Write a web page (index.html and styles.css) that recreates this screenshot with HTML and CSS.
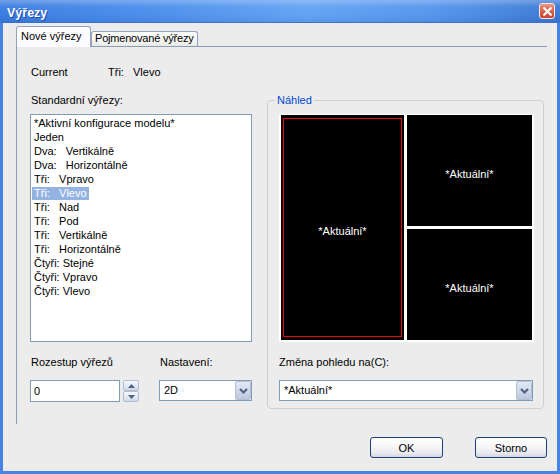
FILE: index.html
```html
<!DOCTYPE html>
<html lang="cs">
<head>
<meta charset="utf-8">
<title>Výřezy</title>
<link rel="stylesheet" href="styles.css">
</head>
<body>
<div class="window">
  <div class="titlebar">
    <span class="title">Výřezy</span>
    <span class="close"><svg width="9" height="9" viewBox="0 0 9 9"><path d="M1.2 1.2 L7.8 7.8 M7.8 1.2 L1.2 7.8" stroke="#fff" stroke-width="2" stroke-linecap="square"/></svg></span>
  </div>
  <div class="client">
    <div class="tabs">
      <div class="tab active">Nové výřezy</div>
      <div class="tab">Pojmenované výřezy</div>
    </div>
    <div class="panel">
      <div class="current"><span class="c1">Current</span><span class="c2">Tři:</span><span>Vlevo</span></div>
      <div class="cols">
        <div class="leftcol">
          <div class="label">Standardní výřezy:</div>
          <div class="listbox">
            <div class="item">*Aktivní konfigurace modelu*</div>
            <div class="item">Jeden</div>
            <div class="item">Dva:   Vertikálně</div>
            <div class="item">Dva:   Horizontálně</div>
            <div class="item">Tři:   Vpravo</div>
            <div class="item"><span class="sel">Tři:   Vlevo</span></div>
            <div class="item">Tři:   Nad</div>
            <div class="item">Tři:   Pod</div>
            <div class="item">Tři:   Vertikálně</div>
            <div class="item">Tři:   Horizontálně</div>
            <div class="item">Čtyři: Stejné</div>
            <div class="item">Čtyři: Vpravo</div>
            <div class="item">Čtyři: Vlevo</div>
          </div>
          <div class="bottomrow">
            <div class="field f1">
              <div class="label">Rozestup výřezů</div>
              <div class="inrow">
                <div class="input">0</div>
                <div class="spin">
                  <div class="sb"><svg width="7" height="4" viewBox="0 0 7 4"><path d="M0 4 L3.5 0 L7 4 Z" fill="#4d6185"/></svg></div>
                  <div class="sb"><svg width="7" height="4" viewBox="0 0 7 4"><path d="M0 0 L3.5 4 L7 0 Z" fill="#4d6185"/></svg></div>
                </div>
              </div>
            </div>
            <div class="field f2">
              <div class="label">Nastavení:</div>
              <div class="combo small">
                <span class="val">2D</span>
                <span class="dd"><svg width="9" height="6" viewBox="0 0 9 6"><path d="M1 1 L4.5 4.5 L8 1" fill="none" stroke="#4d6185" stroke-width="2"/></svg></span>
              </div>
            </div>
          </div>
        </div>
        <fieldset class="group">
          <legend>Náhled</legend>
          <div class="preview">
            <div class="vp big"><div class="frame">*Aktuální*</div></div>
            <div class="rcol">
              <div class="vp">*Aktuální*</div>
              <div class="vp">*Aktuální*</div>
            </div>
          </div>
          <div class="glabel">Změna pohledu na(C):</div>
          <div class="combo wide">
            <span class="val">*Aktuální*</span>
            <span class="dd"><svg width="9" height="6" viewBox="0 0 9 6"><path d="M1 1 L4.5 4.5 L8 1" fill="none" stroke="#4d6185" stroke-width="2"/></svg></span>
          </div>
        </fieldset>
      </div>
    </div>
    <div class="footer">
      <button class="btn ok">OK</button>
      <button class="btn storno">Storno</button>
    </div>
  </div>
</div>
</body>
</html>
```

FILE: styles.css
```css
* { box-sizing: border-box; }
html, body { margin: 0; padding: 0; }
body {
  width: 560px;
  height: 474px;
  overflow: hidden;
  font-family: "Liberation Sans", Arial, sans-serif;
  font-size: 11px;
  color: #000;
}
.window {
  width: 560px;
  height: 474px;
  display: flex;
  flex-direction: column;
  background: #4584e0;
}
.titlebar {
  height: 23px;
  flex: none;
  display: flex;
  align-items: center;
  justify-content: space-between;
  padding: 1px 5px 0 7px;
  background:
    linear-gradient(to bottom, rgba(255,255,255,0.28) 0%, rgba(255,255,255,0.05) 30%, rgba(255,255,255,0) 70%, rgba(0,0,0,0.06) 100%),
    linear-gradient(to right, #3a7ce0 0%, #4b8deb 25%, #62a3f3 55%, #5495ec 78%, #3c78d5 100%);
  border-bottom: 1px solid #3a70cf;
}
.title {
  color: #fff;
  font-weight: bold;
  font-size: 12.5px;
  text-shadow: 1px 1px 0 #1d4aa8;
  line-height: 14px;
  padding-top: 2px;
}
.close {
  width: 16px;
  height: 16px;
  border: 1px solid #f4e8e4;
  border-radius: 3px;
  background: linear-gradient(to bottom, #ea9a88 0%, #dc6450 45%, #c9452f 100%);
  display: flex;
  align-items: center;
  justify-content: center;
  margin-top: -1px;
}
.client {
  flex: 1;
  margin: 0 3px 3px 3px;
  background: #ececec;
  display: flex;
  flex-direction: column;
}
.tabs {
  display: flex;
  align-items: flex-end;
  height: 20px;
  margin: 3px 0 0 13px;
}
.tab {
  height: 15px;
  width: 107px;
  border: 1px solid #91a3bd;
  border-bottom: none;
  border-radius: 3px 3px 0 0;
  background: linear-gradient(to bottom, #ffffff 0%, #f5f5f3 60%, #e9e9e4 100%);
  padding-left: 3px;
  line-height: 13px;
  white-space: nowrap;
  letter-spacing: -0.2px;
  overflow: hidden;
}
.tab.active {
  width: 75px;
  height: 21px;
  margin-bottom: -1px;
  background: #fcfcfe;
  position: relative;
  z-index: 1;
  padding-top: 2px;
  padding-left: 4px;
  line-height: 14px;
  letter-spacing: 0;
}
.panel {
  width: 531px;
  height: 378px;
  margin-left: 13px;
  border-left: 1px solid #8a9cba;
  border-top: 1px solid #8a9cba;
  padding: 18px 0 0 13px;
}
.current {
  height: 14px;
  line-height: 14px;
  padding-left: 1px;
  display: flex;
}
.c1 { width: 77px; }
.c2 { width: 25px; }
.cols {
  display: flex;
  gap: 15px;
  margin-top: 14px;
  align-items: flex-start;
}
.leftcol { width: 222px; }
.label {
  line-height: 14px;
  margin-left: 1px;
  white-space: nowrap;
}
.listbox {
  margin-top: 7px;
  height: 228px;
  border: 1px solid #7f9db9;
  background: #fff;
  padding: 1px 0 0 1px;
}
.item {
  height: 14px;
  line-height: 14px;
  padding-left: 2px;
  white-space: pre;
}
.sel {
  display: inline-block;
  background: #94b3e3;
  color: #fff;
  margin-left: -2px;
  padding: 0 2px;
  height: 13px;
  line-height: 13px;
}
.bottomrow {
  display: flex;
  margin-top: 13px;
}
.f1 { width: 129px; }
.inrow {
  display: flex;
  margin-top: 11px;
}
.input {
  width: 90px;
  height: 22px;
  border: 1px solid #7f9db9;
  background: #fff;
  padding-left: 3px;
  line-height: 20px;
}
.spin {
  margin-left: 3px;
  width: 16px;
  height: 22px;
  display: flex;
  flex-direction: column;
}
.sb {
  height: 11px;
  border: 1px solid #b2bed3;
  border-radius: 2px;
  background: linear-gradient(to bottom, #f6f8fc 0%, #e2e7f2 60%, #cfd7e7 100%);
  display: flex;
  align-items: center;
  justify-content: center;
}
.combo {
  height: 21px;
  border: 1px solid #7f9db9;
  background: #fff;
  display: flex;
  margin-top: 11px;
}
.combo.small { width: 93px; }
.combo.wide { width: 254px; }
.val {
  flex: 1;
  padding-left: 4px;
  line-height: 19px;
  white-space: nowrap;
}
.dd {
  width: 16px;
  height: 19px;
  border: 1px solid #b4c0d8;
  border-radius: 2px;
  background: linear-gradient(to bottom, #e4e9f4 0%, #cdd5e7 60%, #bcc6dc 100%);
  display: flex;
  align-items: center;
  justify-content: center;
}
.group {
  margin: 0;
  width: 277px;
  min-width: 0;
  padding: 7px 9px 7px 11px;
  border: 1px solid #d0d0c8;
  border-radius: 4px;
}
.group legend {
  padding: 0 2px;
  margin-left: -4px;
  color: #0046d5;
  line-height: 14px;
}
.preview {
  width: 255px;
  height: 228px;
  background: #fff;
  padding: 1px 2px 2px 2px;
  display: flex;
  gap: 3px;
}
.vp {
  background: #000;
  color: #fff;
  display: flex;
  align-items: center;
  justify-content: center;
  padding-top: 6px;
}
.vp.big {
  width: 123px;
  padding: 3px 2px 3px 2px;
  align-items: stretch;
  justify-content: stretch;
}
.frame {
  flex: 1;
  border: 1px solid #e00c0c;
  display: flex;
  align-items: center;
  justify-content: center;
  padding-top: 6px;
}
.rcol {
  flex: 1;
  display: flex;
  flex-direction: column;
  gap: 3px;
}
.rcol .vp { flex: 1; }
.glabel {
  margin-top: 13px;
  line-height: 14px;
}
.footer {
  display: flex;
  justify-content: flex-end;
  gap: 32px;
  margin-top: 13px;
  padding-right: 10px;
}
.btn {
  height: 21px;
  border: 1px solid #1f3f78;
  border-radius: 3px;
  background: linear-gradient(to bottom, #ffffff 0%, #f6f6f8 45%, #e8e8ef 80%, #d6d6e0 100%);
  font-family: "Liberation Sans", Arial, sans-serif;
  font-size: 11px;
  color: #000;
  padding: 0;
}
.btn.ok { width: 73px; }
.btn.storno { width: 72px; }
```
